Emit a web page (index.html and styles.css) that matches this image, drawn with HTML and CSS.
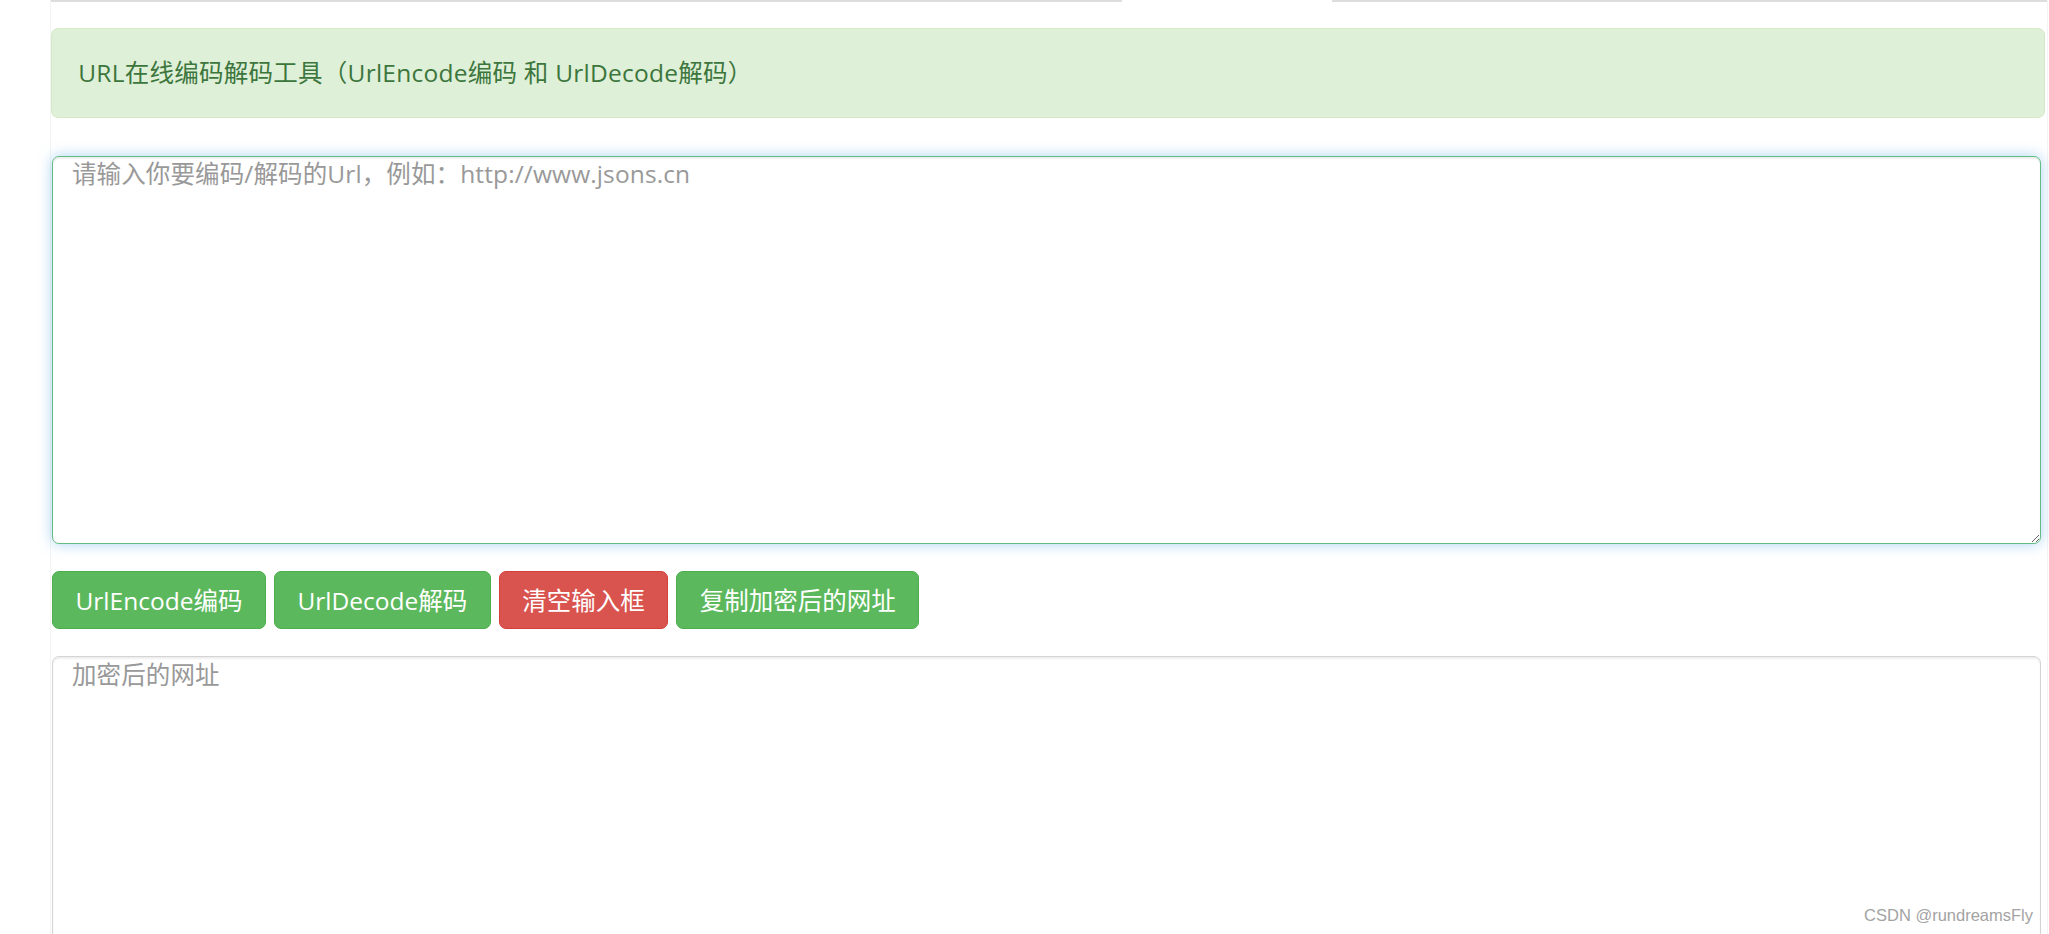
FILE: index.html
```html
<!DOCTYPE html>
<html lang="zh-CN">
<head>
<meta charset="utf-8">
<title>URL在线编码解码工具</title>
<link rel="stylesheet" href="styles.css">
</head>
<body>
<div class="wrap">
  <div class="nav-line">
    <span class="seg seg-left"></span>
    <span class="seg-gap"></span>
    <span class="seg seg-right"></span>
  </div>
  <div class="alert">URL在线编码解码工具（UrlEncode编码 和 UrlDecode解码）</div>
  <textarea class="field field-input" placeholder="请输入你要编码/解码的Url，例如：http://www.jsons.cn"></textarea>
  <div class="actions">
    <button class="btn btn-success" type="button">UrlEncode编码</button>
    <button class="btn btn-success" type="button">UrlDecode解码</button>
    <button class="btn btn-danger" type="button">清空输入框</button>
    <button class="btn btn-success" type="button">复制加密后的网址</button>
  </div>
  <textarea class="field field-output" placeholder="加密后的网址"></textarea>
</div>
<div class="watermark">CSDN @rundreamsFly</div>
</body>
</html>
```

FILE: styles.css
```css
html, body {
  margin: 0;
  padding: 0;
  background: #ffffff;
  overflow: hidden;
}

body {
  font-family: "Open Sans", "Noto Sans CJK SC", sans-serif;
  font-size: 24.5px;
  line-height: 35px;
  color: #333333;
}

.wrap {
  margin-left: 50px;
  width: 1996px;
  border-left: 1px solid #f4f4f4;
  border-right: 1px solid #f4f4f4;
  min-height: 934px;
}

.nav-line {
  display: flex;
  height: 1.5px;
}

.seg {
  display: block;
  height: 1.5px;
  background: #dddddd;
}

.seg-left {
  width: 1071px;
}

.seg-gap {
  width: 210px;
}

.seg-right {
  flex: 1;
}

.alert {
  margin: 26.5px 2px 38px 0;
  padding: 26.25px;
  border: 1.75px solid #d6e9c6;
  border-radius: 7px;
  background: #dff0d8;
  color: #3c763d;
  letter-spacing: 0.25px;
  white-space: nowrap;
}

.field {
  display: block;
  box-sizing: border-box;
  width: 1989px;
  margin: 0 0 0 1px;
  padding: 1.5px 19px 0;
  font-family: "Open Sans", "Noto Sans CJK SC", sans-serif;
  font-size: 24.5px;
  line-height: 32px;
  letter-spacing: 0.12px;
  color: #555555;
  background: #ffffff;
  border-radius: 7px;
  outline: none;
  resize: both;
}

.field::placeholder {
  color: #999999;
  opacity: 1;
}

.field-input {
  height: 388.5px;
  border: 1.75px solid #62bd85;
  box-shadow: inset 0 1.75px 1.75px rgba(0, 0, 0, 0.075), 0 0 14px rgba(102, 175, 233, 0.55);
}

.field-output {
  height: 400px;
  border: 1.75px solid #d4d4d4;
  box-shadow: inset 0 1.75px 1.75px rgba(0, 0, 0, 0.075);
}

.actions {
  display: flex;
  gap: 8px;
  margin: 27.3px 0 27px 1px;
}

.btn {
  display: inline-block;
  margin: 0;
  padding: 10.5px 22.5px;
  font-family: "Open Sans", "Noto Sans CJK SC", sans-serif;
  font-size: 24.5px;
  line-height: 35px;
  color: #ffffff;
  border: 1.75px solid transparent;
  border-radius: 7px;
  white-space: nowrap;
  cursor: pointer;
}

.btn-success {
  background: #5cb85c;
  border-color: #4cae4c;
}

.btn-danger {
  background: #d9534f;
  border-color: #d43f3a;
}

.watermark {
  position: absolute;
  right: 16px;
  bottom: 9px;
  font-family: "Liberation Sans", Arial, sans-serif;
  font-size: 16.5px;
  line-height: 20px;
  color: #a3a3a3;
  pointer-events: none;
}
```
